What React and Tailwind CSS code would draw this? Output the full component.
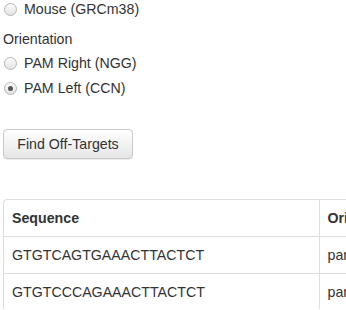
function Radio({ checked, label }) {
  return (
    <label className="flex items-center h-5 leading-5">
      <span className="w-[13px] h-[13px] rounded-full border border-[#b5b5b5] bg-gradient-to-b from-[#fdfdfd] to-[#e2e2e2] flex items-center justify-center mr-[7px] ml-px">
        {checked && <span className="w-[5px] h-[5px] rounded-full bg-[#555]" />}
      </span>
      <span>{label}</span>
    </label>
  );
}

const rows = [
  ["GTGTCAGTGAAACTTACTCT", "parallel"],
  ["GTGTCCCAGAAACTTACTCT", "parallel"],
];

export default function App() {
  return (
    <div
      className="w-[346px] h-[310px] overflow-hidden bg-white text-[#333] text-[14.2px] leading-5 pl-[3px] -mt-px"
      style={{ fontFamily: '"Liberation Sans", Arial, sans-serif' }}
    >
      <Radio label="Mouse (GRCm38)" />

      <div className="mt-[10px]">Orientation</div>
      <div className="mt-1">
        <Radio label="PAM Right (NGG)" />
      </div>
      <div className="mt-[5px]">
        <Radio checked label="PAM Left (CCN)" />
      </div>

      <button className="mt-[31px] h-[30px] w-[130px] rounded-[4px] border border-[#c8c8c8] bg-gradient-to-b from-white to-[#e6e6e6] text-[#333] text-[14.2px] shadow-[inset_0_1px_0_rgba(255,255,255,0.15),0_1px_1px_rgba(0,0,0,0.075)]">
        Find Off-Targets
      </button>

      <div className="mt-[40px] w-[420px] border border-[#ddd] rounded-tl-[4px] overflow-hidden">
        <table className="border-collapse w-full">
          <thead>
            <tr>
              <th className="text-left font-bold px-2 py-2 h-[35px] w-[315px] border-r border-[#ddd]">Sequence</th>
              <th className="text-left font-bold px-2 py-2">Orientation</th>
            </tr>
          </thead>
          <tbody>
            {rows.map((r) => (
              <tr key={r[0]} className="border-t border-[#ddd]">
                <td className="px-2 py-2 h-[36px] border-r border-[#ddd]">{r[0]}</td>
                <td className="px-2 py-2">{r[1]}</td>
              </tr>
            ))}
          </tbody>
        </table>
      </div>
    </div>
  );
}
